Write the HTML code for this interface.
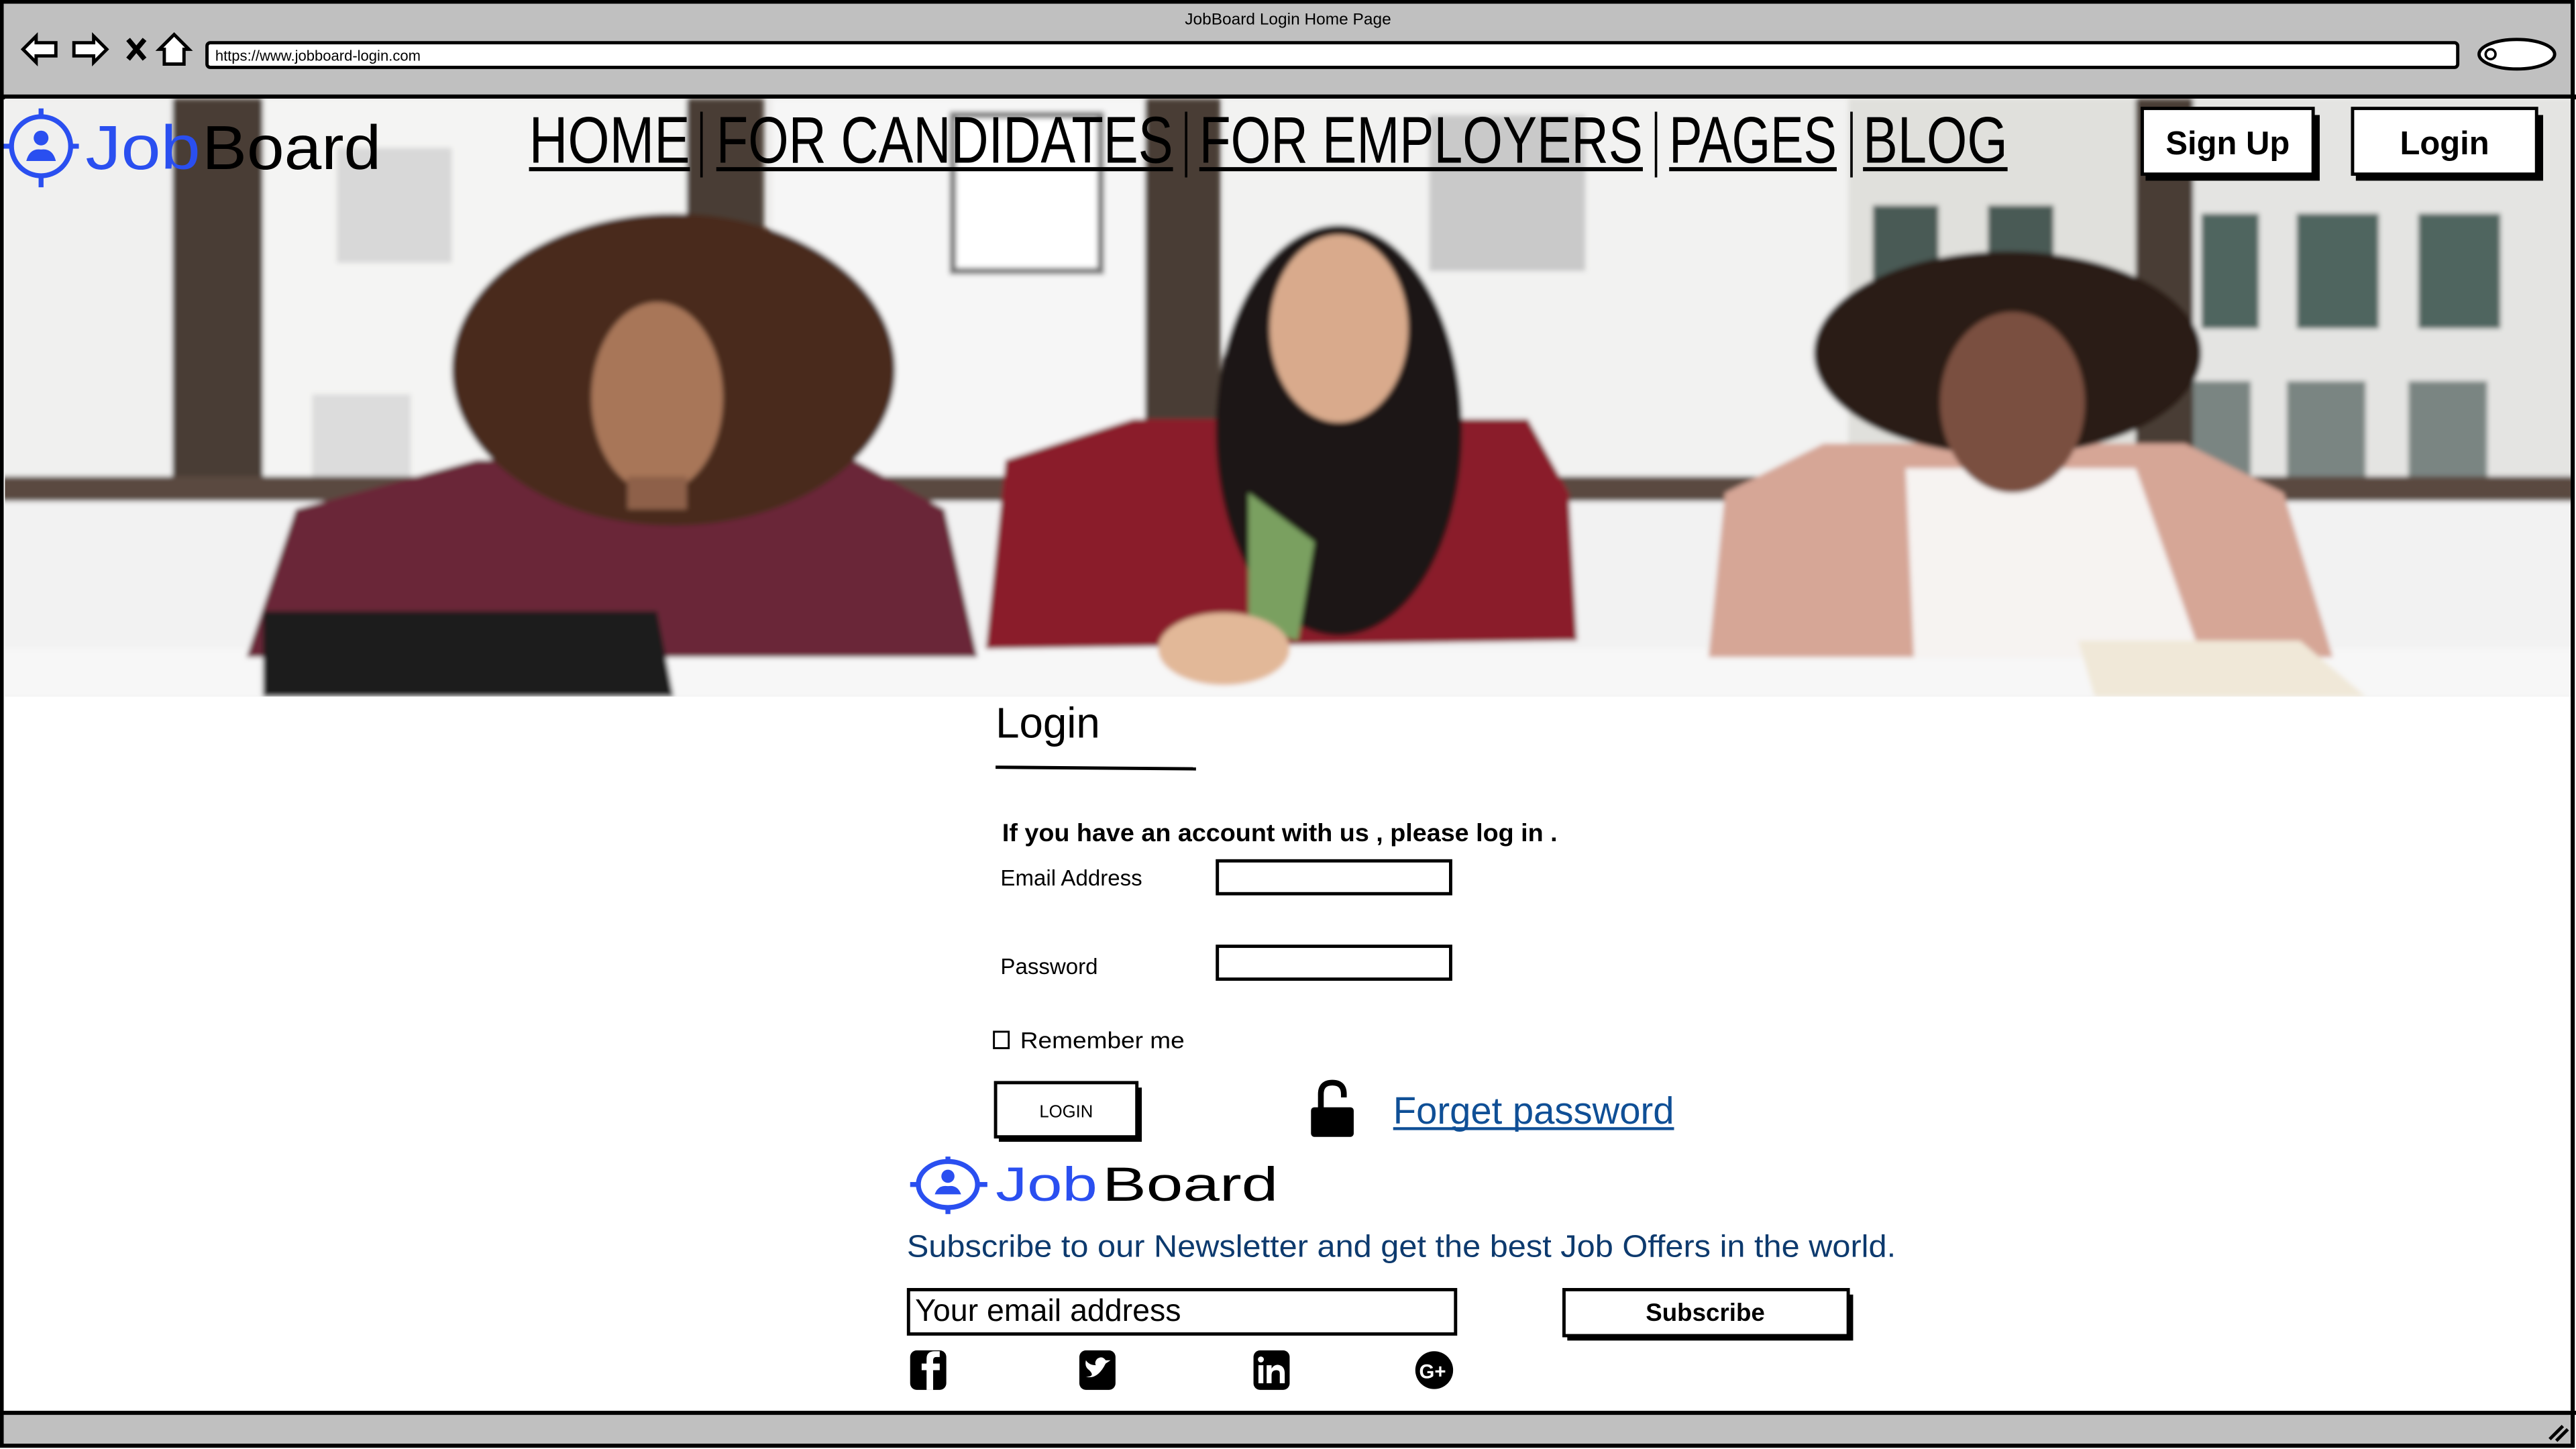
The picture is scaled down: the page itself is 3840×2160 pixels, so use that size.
<!DOCTYPE html>
<html><head><meta charset="utf-8"><style>
html,body{margin:0;padding:0;background:#fff;}
svg{display:block;}
text{font-family:"Liberation Sans",sans-serif;}
</style></head><body>
<svg width="3840" height="2160" viewBox="0 0 1568 882" preserveAspectRatio="none" xmlns="http://www.w3.org/2000/svg">
<defs>
<filter id="bl" x="-10%" y="-10%" width="120%" height="120%"><feGaussianBlur stdDeviation="1.5"/></filter>
<clipPath id="hc"><rect x="3" y="60" width="1562" height="364"/></clipPath>
</defs>
<rect width="1568" height="882" fill="#fff"/>
<!-- browser chrome -->
<rect x="1" y="1" width="1566" height="58" fill="#c0c0c0"/>
<text x="784" y="15" font-size="10" text-anchor="middle">JobBoard Login Home Page</text>
<rect x="126" y="26" width="1370" height="15" rx="2" fill="#fff" stroke="#000" stroke-width="2"/>
<text x="131" y="37" font-size="9">https://www.jobboard-login.com</text>
<ellipse cx="1532" cy="33" rx="23" ry="9" fill="#fff" stroke="#000" stroke-width="2"/>
<circle cx="1516" cy="33" r="3" fill="none" stroke="#000" stroke-width="1.5"/>
<path d="M14 30 L22 22 L22 26 L34 26 L34 34 L22 34 L22 38 Z" fill="#fff" stroke="#000" stroke-width="2"/>
<path d="M65 30 L57 22 L57 26 L45 26 L45 34 L57 34 L57 38 Z" fill="#fff" stroke="#000" stroke-width="2"/>
<path d="M78 24 L88 36 M88 24 L78 36" stroke="#000" stroke-width="3"/>
<path d="M106 21 L97 30 L100 30 L100 39 L112 39 L112 30 L115 30 Z" fill="#fff" stroke="#000" stroke-width="2"/>
<line x1="0" y1="59" x2="1568" y2="59" stroke="#000" stroke-width="3"/>
<!-- hero -->
<g clip-path="url(#hc)">
<rect x="0" y="60" width="1568" height="364" fill="#ecebea"/>
<g filter="url(#bl)">
<rect x="160" y="60" width="260" height="240" fill="#f4f4f3"/>
<rect x="205" y="90" width="70" height="70" fill="#d8d8d8"/>
<rect x="190" y="240" width="60" height="50" fill="#dcdcdc"/>
<rect x="470" y="60" width="230" height="240" fill="#f6f6f6"/>
<rect x="580" y="70" width="90" height="95" fill="#ffffff" stroke="#777" stroke-width="4"/>
<rect x="745" y="60" width="380" height="240" fill="#f2f2f1"/>
<rect x="870" y="70" width="95" height="95" fill="#c9c9c9"/>
<rect x="1125" y="60" width="180" height="240" fill="#e0e0dc"/>
<rect x="1140" y="125" width="40" height="70" fill="#4a5a55"/>
<rect x="1210" y="125" width="40" height="70" fill="#4a5a55"/>
<rect x="1335" y="60" width="233" height="240" fill="#e4e4e2"/>
<rect x="1340" y="130" width="35" height="70" fill="#50655f"/>
<rect x="1398" y="130" width="50" height="70" fill="#50655f"/>
<rect x="1472" y="130" width="50" height="70" fill="#50655f"/>
<rect x="1330" y="232" width="40" height="62" fill="#7a8582"/>
<rect x="1392" y="232" width="48" height="62" fill="#7a8582"/>
<rect x="1466" y="232" width="48" height="62" fill="#7a8582"/>
<rect x="0" y="60" width="105" height="240" fill="#f0f0ef"/>
<rect x="105" y="60" width="55" height="245" fill="#4a3c35"/>
<rect x="418" y="60" width="47" height="245" fill="#4a3c35"/>
<rect x="697" y="60" width="46" height="245" fill="#4a3c35"/>
<rect x="1300" y="60" width="35" height="245" fill="#4a3c35"/>
<rect x="0" y="290" width="1568" height="16" fill="#5a4a40"/>
<rect x="0" y="305" width="1568" height="95" fill="#f2f2f2"/>
<rect x="0" y="395" width="1568" height="30" fill="#f7f7f7"/>
<!-- left woman -->
<path d="M150 400 L180 310 L290 280 L520 280 L575 310 L595 400 Z" fill="#6a2838"/>
<ellipse cx="410" cy="225" rx="135" ry="95" fill="#4a2c1c"/>
<ellipse cx="400" cy="242" rx="40" ry="58" fill="#a87658"/>
<rect x="382" y="290" width="36" height="20" fill="#8e6048"/>
<path d="M160 372 L400 372 L410 424 L160 424 Z" fill="#1c1c1e"/>
<!-- middle woman -->
<path d="M600 395 L612 280 L690 255 L930 255 L955 300 L960 390 Z" fill="#8a1e2c"/>
<ellipse cx="815" cy="262" rx="75" ry="125" fill="#1e1612"/>
<path d="M760 300 L800 330 L790 390 L760 380 Z" fill="#7aa060"/>
<ellipse cx="815" cy="200" rx="42" ry="57" fill="#d9aa8c"/>
<ellipse cx="745" cy="395" rx="40" ry="22" fill="#e2b898"/>
<!-- right woman -->
<path d="M1040 400 L1050 300 L1110 270 L1330 270 L1390 300 L1420 400 Z" fill="#d6a696"/>
<path d="M1160 285 L1300 285 L1340 400 L1165 400 Z" fill="#f6f3f1"/>
<ellipse cx="1222" cy="215" rx="118" ry="62" fill="#2a1c14"/>
<ellipse cx="1225" cy="245" rx="44" ry="55" fill="#7a5040"/>
<path d="M1265 390 L1400 390 L1440 424 L1275 424 Z" fill="#f0e8d8"/>
</g>
</g>
<!-- logo top -->
<g stroke="#2a4ff0" fill="none" stroke-width="3">
<circle cx="25" cy="89" r="18"/>
<line x1="25" y1="66" x2="25" y2="72"/><line x1="25" y1="107" x2="25" y2="114"/>
<line x1="2" y1="89" x2="8" y2="89"/><line x1="42" y1="89" x2="48" y2="89"/>
</g>
<circle cx="25" cy="84" r="4.5" fill="#2a4ff0"/>
<path d="M16 98 Q18 90 25 91 Q32 90 34 98 Z" fill="#2a4ff0"/>
<text x="52" y="103" font-size="38" fill="#2a4ff0" textLength="70" lengthAdjust="spacingAndGlyphs">Job</text>
<text x="123" y="103" font-size="38" fill="#000" textLength="109" lengthAdjust="spacingAndGlyphs">Board</text>
<!-- nav -->
<g font-size="40" fill="#000">
<text x="322" y="99" textLength="98" lengthAdjust="spacingAndGlyphs">HOME</text>
<text x="436" y="99" textLength="278" lengthAdjust="spacingAndGlyphs">FOR CANDIDATES</text>
<text x="730" y="99" textLength="270" lengthAdjust="spacingAndGlyphs">FOR EMPLOYERS</text>
<text x="1016" y="99" textLength="102" lengthAdjust="spacingAndGlyphs">PAGES</text>
<text x="1134" y="99" textLength="88" lengthAdjust="spacingAndGlyphs">BLOG</text>
</g>
<g stroke="#000" stroke-width="2.5">
<line x1="322" y1="103" x2="420" y2="103"/><line x1="436" y1="103" x2="714" y2="103"/>
<line x1="730" y1="103" x2="1000" y2="103"/><line x1="1016" y1="103" x2="1118" y2="103"/>
<line x1="1134" y1="103" x2="1222" y2="103"/>
</g>
<g stroke="#000" stroke-width="1.5">
<line x1="427" y1="68" x2="427" y2="108"/><line x1="722" y1="68" x2="722" y2="108"/>
<line x1="1008" y1="68" x2="1008" y2="108"/><line x1="1127" y1="68" x2="1127" y2="108"/>
</g>
<!-- buttons -->
<rect x="1306" y="70" width="106" height="40" fill="#000"/>
<rect x="1304" y="66" width="104" height="40" fill="#fff" stroke="#000" stroke-width="2"/>
<text x="1356" y="94" font-size="20" font-weight="bold" text-anchor="middle">Sign Up</text>
<rect x="1434" y="70" width="114" height="40" fill="#000"/>
<rect x="1432" y="66" width="112" height="40" fill="#fff" stroke="#000" stroke-width="2"/>
<text x="1488" y="94" font-size="20" font-weight="bold" text-anchor="middle">Login</text>
<!-- login form -->
<text x="606" y="449" font-size="26">Login</text>
<line x1="606" y1="467" x2="728" y2="468" stroke="#000" stroke-width="2"/>
<text x="610" y="512" font-size="15" font-weight="bold" textLength="338" lengthAdjust="spacingAndGlyphs">If you have an account with us , please log in .</text>
<text x="609" y="539" font-size="13.5">Email Address</text>
<rect x="741" y="524" width="142" height="20" fill="#fff" stroke="#000" stroke-width="2"/>
<text x="609" y="593" font-size="13.5">Password</text>
<rect x="741" y="576" width="142" height="20" fill="#fff" stroke="#000" stroke-width="2"/>
<rect x="605" y="628" width="9" height="10" fill="#fff" stroke="#000" stroke-width="1.2"/>
<text x="621" y="638" font-size="14" textLength="100" lengthAdjust="spacingAndGlyphs">Remember me</text>
<rect x="608" y="662" width="87" height="33" fill="#000"/>
<rect x="606" y="659" width="86" height="33" fill="#fff" stroke="#000" stroke-width="2"/>
<text x="649" y="680" font-size="10.5" text-anchor="middle">LOGIN</text>
<path d="M804 675 L804 666 Q804 659 811 659 Q818 659 818 666 L818 668" fill="none" stroke="#000" stroke-width="3.5"/>
<rect x="798" y="674" width="26" height="18" rx="2" fill="#000"/>
<text x="848" y="684" font-size="23" fill="#0f4f96" textLength="171" lengthAdjust="spacingAndGlyphs">Forget password</text>
<line x1="848" y1="687" x2="1019" y2="687" stroke="#0f4f96" stroke-width="1.8"/>
<!-- footer logo -->
<g stroke="#2a4ff0" fill="none" stroke-width="3">
<ellipse cx="577" cy="721" rx="18" ry="14"/>
<line x1="577" y1="704" x2="577" y2="708"/><line x1="577" y1="735" x2="577" y2="739"/>
<line x1="554" y1="721" x2="559" y2="721"/><line x1="596" y1="721" x2="601" y2="721"/>
</g>
<circle cx="577" cy="716" r="4" fill="#2a4ff0"/>
<path d="M569 727 Q571 721 577 722 Q583 721 585 727 Z" fill="#2a4ff0"/>
<text x="606" y="731" font-size="29" fill="#2a4ff0" textLength="62" lengthAdjust="spacingAndGlyphs">Job</text>
<text x="671" y="731" font-size="29" fill="#000" textLength="107" lengthAdjust="spacingAndGlyphs">Board</text>
<text x="552" y="765" font-size="19" fill="#0d3a6e" textLength="602" lengthAdjust="spacingAndGlyphs">Subscribe to our Newsletter and get the best Job Offers in the world.</text>
<rect x="553" y="785" width="333" height="27" fill="#fff" stroke="#000" stroke-width="2"/>
<text x="557" y="804" font-size="19">Your email address</text>
<rect x="954" y="788" width="174" height="28" fill="#000"/>
<rect x="952" y="785" width="173" height="28" fill="#fff" stroke="#000" stroke-width="2"/>
<text x="1038" y="804" font-size="15" font-weight="bold" text-anchor="middle">Subscribe</text>
<!-- social -->
<rect x="554" y="822" width="22" height="24" rx="4" fill="#000"/>
<path d="M568 846 L568 834 L572 834 L572 830 L568 830 L568 828 Q568 826 570 826 L572 826 L572 822.5 L569 822.5 Q564 822.5 564 827 L564 830 L561 830 L561 834 L564 834 L564 846 Z" fill="#fff"/>
<rect x="657" y="822" width="22" height="24" rx="4" fill="#000"/>
<path d="M661 838 Q668 840 673 830 L676 828 L673 828 Q671 825 668 827 Q666 829 667 831 Q663 831 661 828 Q660 832 663 834 Q667 838 661 838 Z" fill="#fff"/>
<rect x="763" y="822" width="22" height="24" rx="4" fill="#000"/>
<rect x="766" y="831" width="3" height="11" fill="#fff"/><circle cx="767.5" cy="827.5" r="1.8" fill="#fff"/>
<path d="M771 842 L771 831 L774 831 L774 833 Q776 830 779 831 Q782 832 782 836 L782 842 L779 842 L779 836 Q779 834 777 834 Q774 834 774 837 L774 842 Z" fill="#fff"/>
<circle cx="873" cy="834" r="11.5" fill="#000"/>
<text x="872" y="839" font-size="12" font-weight="bold" fill="#fff" text-anchor="middle">G+</text>
<!-- bottom bar & frame -->
<rect x="1" y="860" width="1566" height="21" fill="#c0c0c0"/>
<line x1="0" y1="860" x2="1568" y2="860" stroke="#000" stroke-width="2.5"/>
<path d="M1552 876 L1560 868 M1556 877 L1563 870" stroke="#000" stroke-width="2"/>
<rect x="1" y="1" width="1565" height="879" fill="none" stroke="#000" stroke-width="2.5"/>
</svg>
</body></html>
